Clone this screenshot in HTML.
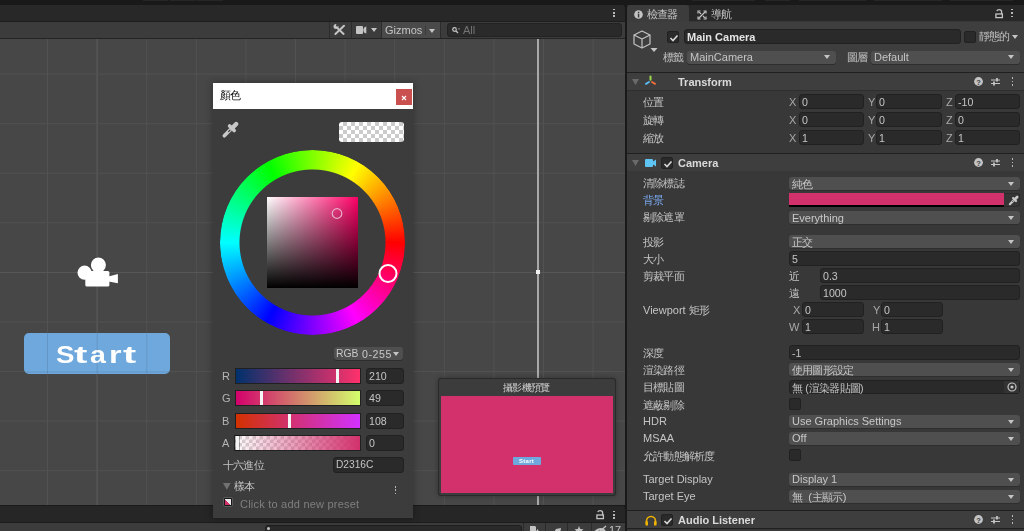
<!DOCTYPE html>
<html lang="zh-Hant"><head><meta charset="utf-8"><style>
*{margin:0;padding:0;box-sizing:border-box}
html,body{width:1024px;height:531px;overflow:hidden;background:#191919;font-family:"Liberation Sans",sans-serif;color:#c4c4c4;font-size:11px}
.a{position:absolute}
.t{position:absolute;white-space:nowrap;line-height:1;will-change:transform}
.fld{position:absolute;background:#2a2a2a;border:1px solid #212121;border-radius:3px}
.dd{position:absolute;background:#4f4f4f;border-radius:3px;box-shadow:0 1px 0 #2e2e2e}
.arr{position:absolute;width:0;height:0;border-left:3.5px solid transparent;border-right:3.5px solid transparent;border-top:4px solid #c4c4c4}
.cb{position:absolute;width:12px;height:12px;background:#2a2a2a;border:1px solid #212121;border-radius:2px}
svg{position:absolute;overflow:visible}
</style></head>
<body>
<div id="root" style="position:relative;width:1024px;height:531px;overflow:hidden">
<div class="a" style="left:0px;top:0px;width:1024px;height:5px;background:#191919;"></div>
<div class="a" style="left:143px;top:0px;width:25px;height:1px;background:#262626;"></div>
<div class="a" style="left:170px;top:0px;width:26px;height:1px;background:#262626;"></div>
<div class="a" style="left:197px;top:0px;width:26px;height:1px;background:#262626;"></div>
<div class="a" style="left:692px;top:0px;width:63px;height:1px;background:#262626;"></div>
<div class="a" style="left:765px;top:0px;width:25px;height:1px;background:#262626;"></div>
<div class="a" style="left:799px;top:0px;width:67px;height:1px;background:#262626;"></div>
<div class="a" style="left:874px;top:0px;width:68px;height:1px;background:#262626;"></div>
<div class="a" style="left:950px;top:0px;width:63px;height:1px;background:#262626;"></div>
<div class="a" style="left:0px;top:5px;width:625px;height:16px;background:#282828;border-radius:0 3px 0 0"></div>
<div class="a" style="left:0px;top:21px;width:625px;height:1px;background:#1e1e1e;"></div>
<div class="a" style="left:0px;top:22px;width:625px;height:16px;background:#3c3c3c;"></div>
<div class="a" style="left:0px;top:38px;width:625px;height:1px;background:#242424;"></div>
<div class="a" style="left:0;top:39px;width:625px;height:466px;background:#474747;overflow:hidden">
<svg width="625" height="466" style="left:0;top:0">
<line x1="47.5" y1="0" x2="47.5" y2="466" stroke="#525252" stroke-width="1"/><line x1="97.1" y1="0" x2="97.1" y2="466" stroke="#5e5e5e" stroke-width="1"/><line x1="146.7" y1="0" x2="146.7" y2="466" stroke="#525252" stroke-width="1"/><line x1="196.3" y1="0" x2="196.3" y2="466" stroke="#525252" stroke-width="1"/><line x1="245.9" y1="0" x2="245.9" y2="466" stroke="#525252" stroke-width="1"/><line x1="295.5" y1="0" x2="295.5" y2="466" stroke="#525252" stroke-width="1"/><line x1="345.1" y1="0" x2="345.1" y2="466" stroke="#525252" stroke-width="1"/><line x1="394.7" y1="0" x2="394.7" y2="466" stroke="#525252" stroke-width="1"/><line x1="444.3" y1="0" x2="444.3" y2="466" stroke="#525252" stroke-width="1"/><line x1="493.9" y1="0" x2="493.9" y2="466" stroke="#525252" stroke-width="1"/><line x1="543.5" y1="0" x2="543.5" y2="466" stroke="#525252" stroke-width="1"/><line x1="593.1" y1="0" x2="593.1" y2="466" stroke="#525252" stroke-width="1"/><line x1="0" y1="-14.5" x2="625" y2="-14.5" stroke="#525252" stroke-width="1"/><line x1="0" y1="35.1" x2="625" y2="35.1" stroke="#525252" stroke-width="1"/><line x1="0" y1="84.7" x2="625" y2="84.7" stroke="#525252" stroke-width="1"/><line x1="0" y1="134.2" x2="625" y2="134.2" stroke="#525252" stroke-width="1"/><line x1="0" y1="183.8" x2="625" y2="183.8" stroke="#525252" stroke-width="1"/><line x1="0" y1="233.4" x2="625" y2="233.4" stroke="#5a5a5a" stroke-width="1"/><line x1="0" y1="283.0" x2="625" y2="283.0" stroke="#525252" stroke-width="1"/><line x1="0" y1="332.6" x2="625" y2="332.6" stroke="#525252" stroke-width="1"/><line x1="0" y1="382.1" x2="625" y2="382.1" stroke="#525252" stroke-width="1"/><line x1="0" y1="431.7" x2="625" y2="431.7" stroke="#525252" stroke-width="1"/><line x1="0" y1="481.3" x2="625" y2="481.3" stroke="#525252" stroke-width="1"/>
</svg></div>
<div class="a" style="left:0px;top:505px;width:625px;height:1px;background:#1a1a1a;"></div>
<div class="a" style="left:0px;top:506px;width:625px;height:16px;background:#262626;border-radius:0 3px 0 0"></div>
<div class="a" style="left:0px;top:522px;width:625px;height:1px;background:#1c1c1c;"></div>
<div class="a" style="left:0px;top:523px;width:626px;height:8px;background:#3c3c3c;"></div>
<div class="a" style="left:625px;top:5px;width:2px;height:526px;background:#191919;"></div>
<svg width="625" height="466" style="left:0;top:39px"><line x1="538" y1="0" x2="538" y2="466" stroke="#a8a8a8" stroke-width="2"/></svg>
<div class="a" style="left:536px;top:270px;width:4px;height:4px;background:#f0f0f0;"></div>
<div class="a" style="left:613px;top:8.6px;width:1.8px;height:1.8px;background:#b8b8b8;"></div>
<div class="a" style="left:613px;top:12px;width:1.8px;height:1.8px;background:#b8b8b8;"></div>
<div class="a" style="left:613px;top:15.4px;width:1.8px;height:1.8px;background:#b8b8b8;"></div>
<div class="a" style="left:329px;top:22px;width:1px;height:16px;background:#2c2c2c;"></div>
<div class="a" style="left:351px;top:22px;width:1px;height:16px;background:#2c2c2c;"></div>
<div class="a" style="left:381px;top:22px;width:1px;height:16px;background:#2c2c2c;"></div>
<div class="a" style="left:382px;top:22px;width:58px;height:16px;background:#4a4a4a;"></div>
<div class="a" style="left:440px;top:22px;width:1px;height:16px;background:#2c2c2c;"></div>
<div class="a" style="left:425px;top:26px;width:1px;height:9px;background:#3a3a3a;"></div>
<svg width="14" height="14" style="left:333px;top:23px" viewBox="0 0 14 14"><path d="M11 2.8 L2.4 11" stroke="#c4c4c4" stroke-width="2" stroke-linecap="round"/><path d="M4.6 5.2 L10.6 10.9" stroke="#c4c4c4" stroke-width="2" stroke-linecap="round"/><circle cx="3" cy="3.6" r="2.5" fill="#c4c4c4"/><circle cx="4.3" cy="2.2" r="1.3" fill="#3c3c3c"/></svg>
<div class="a" style="left:356px;top:26px;width:6.5px;height:7.5px;background:#c4c4c4;border-radius:1px"></div>
<svg width="4" height="8" style="left:363.3px;top:26px" viewBox="0 0 4 8"><path d="M3.3 0.5 L3.3 7.5 Q0.3 7 0.3 4 Q0.3 1 3.3 0.5Z" fill="#c4c4c4"/></svg>
<div class="arr" style="left:370.5px;top:28px;border-left-width:3.5px;border-right-width:3.5px;border-top-width:4px"></div>
<div class="t" style="left:385px;top:25px;font-size:11px;color:#c4c4c4;">Gizmos</div>
<div class="arr" style="left:429px;top:29px"></div>
<div class="a" style="left:447px;top:23px;width:175px;height:14px;background:#2a2a2a;border:1px solid #222;border-radius:3px"></div>
<svg width="8" height="7" style="left:452px;top:27px" viewBox="0 0 8 7"><circle cx="2.5" cy="2.5" r="1.8" stroke="#c4c4c4" stroke-width="1.2" fill="none"/><path d="M3.8 3.8 L6 6" stroke="#c4c4c4" stroke-width="1.3"/><path d="M6 1.5 L8 1.5 L7 2.7Z" fill="#c4c4c4"/></svg>
<div class="t" style="left:463px;top:25px;font-size:11px;color:#747474;">All</div>
<svg width="40" height="30" style="left:78px;top:256px" viewBox="78 256 40 30"><circle cx="98.4" cy="266" r="9" fill="none" stroke="#3e3e3e" stroke-width="0.8" opacity="0.6"/><g fill="#ffffff"><circle cx="84.6" cy="272.7" r="7.1"/><circle cx="98.4" cy="265" r="7.5"/><rect x="85.3" y="271" width="24.1" height="15.4" rx="1.5"/><path d="M108.5 276.5 L117.9 274 L117.9 283.3 L108.5 281.5Z"/></g></svg>
<div class="a" style="left:24px;top:333px;width:146px;height:41px;background:#6fa8dc;border-radius:5px"></div>
<div class="t" style="left:56.3px;top:344px;font-size:23px;font-weight:bold;color:#fff;transform-origin:0 0;transform:scaleX(1.2)">S</div>
<div class="t" style="left:74.3px;top:344px;font-size:23px;font-weight:bold;color:#fff;transform-origin:0 0;transform:scaleX(1.75)">t</div>
<div class="t" style="left:89.6px;top:344px;font-size:23px;font-weight:bold;color:#fff;transform-origin:0 0;transform:scaleX(1.24)">a</div>
<div class="t" style="left:108.9px;top:344px;font-size:23px;font-weight:bold;color:#fff;transform-origin:0 0;transform:scaleX(1.4)">r</div>
<div class="t" style="left:123.3px;top:344px;font-size:23px;font-weight:bold;color:#fff;transform-origin:0 0;transform:scaleX(1.72)">t</div>
<svg width="146" height="41" style="left:24px;top:333px" viewBox="24 333 146 41"><g stroke="#000" stroke-opacity="0.10" stroke-width="1"><line x1="47.5" y1="333" x2="47.5" y2="374"/><line x1="97.2" y1="333" x2="97.2" y2="374"/><line x1="146.8" y1="333" x2="146.8" y2="374"/><line x1="24" y1="372" x2="170" y2="372"/></g></svg>
<svg width="10" height="10" style="left:596px;top:510px" viewBox="0 0 10 10"><path d="M1.8 2.2 Q2.2 0.6 4.2 0.6 Q6.6 0.6 6.6 2.8 V5" stroke="#c4c4c4" stroke-width="1.3" fill="none"/><rect x="0.9" y="5" width="6.5" height="3.6" fill="none" stroke="#c4c4c4" stroke-width="1.3"/></svg>
<div class="a" style="left:613px;top:510.6px;width:1.7px;height:1.7px;background:#b8b8b8;"></div>
<div class="a" style="left:613px;top:514px;width:1.7px;height:1.7px;background:#b8b8b8;"></div>
<div class="a" style="left:613px;top:517.4px;width:1.7px;height:1.7px;background:#b8b8b8;"></div>
<div class="a" style="left:265px;top:525px;width:257px;height:12px;background:#2a2a2a;border:1px solid #1e1e1e;border-radius:3px"></div>
<div class="a" style="left:267px;top:527px;width:3px;height:3px;background:#c4c4c4;border-radius:50%"></div>
<div class="a" style="left:523px;top:523px;width:1px;height:8px;background:#2a2a2a;"></div>
<div class="a" style="left:545px;top:523px;width:1px;height:8px;background:#2a2a2a;"></div>
<div class="a" style="left:567px;top:523px;width:1px;height:8px;background:#2a2a2a;"></div>
<div class="a" style="left:591px;top:523px;width:1px;height:8px;background:#2a2a2a;"></div>
<svg width="12" height="8" style="left:529px;top:525px" viewBox="0 0 12 8"><path d="M1 1 H6 L7 2 V8 H1Z" fill="#c4c4c4"/><path d="M6 8 L8.5 4 L11 8Z" fill="#c4c4c4"/></svg>
<svg width="10" height="8" style="left:552px;top:526px" viewBox="0 0 10 8"><path d="M1 8 L4 3 L9 2 L8 8Z" fill="#c4c4c4"/></svg>
<svg width="10" height="8" style="left:574px;top:526px" viewBox="0 0 10 8"><path d="M5 0 L6.2 3 L9.5 3.3 L7 5.5 L7.8 8 L2.2 8 L3 5.5 L0.5 3.3 L3.8 3Z" fill="#c4c4c4"/></svg>
<svg width="14" height="8" style="left:594px;top:525px" viewBox="0 0 14 8"><path d="M1 7 Q6 2 11 6" stroke="#c4c4c4" stroke-width="2.2" fill="none"/><path d="M4 8 L12 1" stroke="#c4c4c4" stroke-width="1.3"/></svg>
<div class="t" style="left:609px;top:525px;font-size:11px;color:#c4c4c4;">17</div>
<div class="a" style="left:213px;top:83px;width:200px;height:435px;background:#3c3c3c;box-shadow:0 0 7px 1px rgba(0,0,0,0.28)"></div>
<div class="a" style="left:213px;top:83px;width:200px;height:26px;background:#ffffff;"></div>
<div class="t" style="left:220px;top:90px;font-size:11px;color:#111;"><span style="font-size:11.00px;letter-spacing:-0.77px;position:relative;top:-0.5px">顏色</span></div>
<div class="a" style="left:396px;top:89px;width:16px;height:16px;background:#c9504f;"></div>
<svg width="6" height="6" style="left:401px;top:94.5px" viewBox="0 0 6 6"><path d="M1 1 L5 5 M5 1 L1 5" stroke="#fff" stroke-width="1.15"/></svg>
<svg width="26" height="26" style="left:218px;top:116px" viewBox="0 0 26 26"><path d="M6.3 19.8 L12.5 13.6" stroke="#c8c8c8" stroke-width="3.6" stroke-linecap="round"/><path d="M11.6 10 L16.2 14.6" stroke="#c8c8c8" stroke-width="3.6" stroke-linecap="round"/><path d="M14.5 11.7 L18.2 8" stroke="#c8c8c8" stroke-width="4.4" stroke-linecap="round"/><path d="M10.6 15.6 L12 14.2" stroke="#3c3c3c" stroke-width="1.2" stroke-linecap="round"/></svg>
<div class="a" style="left:339px;top:122px;width:65px;height:20px;border-radius:3px;background-color:#fff;background-image:linear-gradient(45deg,#cbcbcb 25%,transparent 25%,transparent 75%,#cbcbcb 75%),linear-gradient(45deg,#cbcbcb 25%,transparent 25%,transparent 75%,#cbcbcb 75%);background-size:8px 8px;background-position:0 0,4px 4px"></div>
<div class="a" style="left:220px;top:150px;width:185px;height:185px;border-radius:50%;background:conic-gradient(from 90deg,#f00,#f0f,#00f,#0ff,#0f0,#ff0,#f00);-webkit-mask:radial-gradient(circle,transparent 72.5px,#000 73.5px);mask:radial-gradient(circle,transparent 72.5px,#000 73.5px)"></div>
<div class="a" style="left:267px;top:197px;width:91px;height:91px;background:linear-gradient(to bottom,rgba(0,0,0,0),#000),linear-gradient(to right,#fff,#ff0066)"></div>
<svg width="200" height="200" style="left:213px;top:140px" viewBox="213 140 200 200"><circle cx="388" cy="273.5" r="8.5" fill="none" stroke="#fff" stroke-width="2"/><circle cx="337" cy="213.5" r="4.8" fill="none" stroke="#e8b0c8" stroke-width="1.2"/></svg>
<div class="a" style="left:334px;top:347px;width:69px;height:13px;background:#4f4f4f;border-radius:3px;box-shadow:0 1px 0 #2e2e2e"></div>
<div class="t" style="left:336px;top:349px;font-size:10.4px;color:#c8c8c8;">RGB</div>
<div class="t" style="left:361.5px;top:349px;font-size:10.6px;color:#c8c8c8;letter-spacing:0.55px">0-255</div>
<div class="arr" style="left:393px;top:352px"></div>
<div class="t" style="left:222px;top:371px;font-size:11px;color:#b4b4b4;">R</div>
<div class="a" style="left:235px;top:368px;width:126px;height:16px;background:linear-gradient(to right,rgb(0,49,108),rgb(255,49,108));border:1px solid #202020"></div>
<div class="a" style="left:336px;top:369px;width:3px;height:14px;background:#f4f4f4;"></div>
<div class="fld" style="left:366px;top:368px;width:38px;height:16px"></div>
<div class="t" style="left:369px;top:371px;font-size:10.6px;color:#c4c4c4;">210</div>
<div class="t" style="left:222px;top:393px;font-size:11px;color:#b4b4b4;">G</div>
<div class="a" style="left:235px;top:390px;width:126px;height:16px;background:linear-gradient(to right,rgb(210,0,108),rgb(210,255,108));border:1px solid #202020"></div>
<div class="a" style="left:260px;top:391px;width:3px;height:14px;background:#f4f4f4;"></div>
<div class="fld" style="left:366px;top:390px;width:38px;height:16px"></div>
<div class="t" style="left:369px;top:393px;font-size:10.6px;color:#c4c4c4;">49</div>
<div class="t" style="left:222px;top:416px;font-size:11px;color:#b4b4b4;">B</div>
<div class="a" style="left:235px;top:413px;width:126px;height:16px;background:linear-gradient(to right,rgb(210,49,0),rgb(210,49,255));border:1px solid #202020"></div>
<div class="a" style="left:288px;top:414px;width:3px;height:14px;background:#f4f4f4;"></div>
<div class="fld" style="left:366px;top:413px;width:38px;height:16px"></div>
<div class="t" style="left:369px;top:416px;font-size:10.6px;color:#c4c4c4;">108</div>
<div class="t" style="left:222px;top:438px;font-size:11px;color:#b4b4b4;">A</div>
<div class="a" style="left:234px;top:435px;width:127px;height:16px;border:1px solid #202020;background:linear-gradient(to right,rgba(210,49,108,0),rgba(210,49,108,1)),linear-gradient(45deg,#d2d2d2 25%,transparent 25%,transparent 75%,#d2d2d2 75%),linear-gradient(45deg,#d2d2d2 25%,transparent 25%,transparent 75%,#d2d2d2 75%),#fff;background-size:100% 100%,7px 7px,7px 7px,auto;background-position:0 0,0 0,3.5px 3.5px,0 0"></div>
<div class="a" style="left:236px;top:436px;width:3px;height:14px;background:#f4f4f4;box-shadow:0 0 0 1px rgba(0,0,0,0.3)"></div>
<div class="fld" style="left:366px;top:435px;width:38px;height:16px"></div>
<div class="t" style="left:369px;top:438px;font-size:10.6px;color:#c4c4c4;">0</div>
<div class="t" style="left:223px;top:460px;font-size:11px;color:#c4c4c4;"><span style="font-size:11.00px;letter-spacing:-0.77px;position:relative;top:-0.5px">十六進位</span></div>
<div class="fld" style="left:333px;top:457px;width:71px;height:16px"></div>
<div class="t" style="left:336px;top:460px;font-size:10.2px;color:#c4c4c4;">D2316C</div>
<svg width="8" height="7" style="left:223.4px;top:483px"><path d="M0 0 L7.7 0 L3.85 6.8Z" fill="#727272"/></svg>
<div class="t" style="left:233.5px;top:481px;font-size:11px;color:#c4c4c4;"><span style="font-size:11.00px;letter-spacing:-0.77px;position:relative;top:-0.5px">樣本</span></div>
<div class="a" style="left:394.7px;top:486px;width:1.7px;height:1.7px;background:#b8b8b8;"></div>
<div class="a" style="left:394.7px;top:489.4px;width:1.7px;height:1.7px;background:#b8b8b8;"></div>
<div class="a" style="left:394.7px;top:492.8px;width:1.7px;height:1.7px;background:#b8b8b8;"></div>
<div class="a" style="left:223px;top:497px;width:10px;height:10px;background:#161616;border:1px solid #5a5a5a;border-radius:2px"></div>
<div class="a" style="left:224.5px;top:498.8px;width:6.5px;height:6.5px;background:linear-gradient(to top right,#d2316c 50%,#e8e8e8 50%)"></div>
<div class="t" style="left:240px;top:499px;font-size:11px;color:#7f7f7f;letter-spacing:0.22px">Click to add new preset</div>
<div class="a" style="left:438px;top:378px;width:178px;height:118px;background:#2a2a2a;border-radius:3px;box-shadow:0 0 5px rgba(0,0,0,0.3)"></div>
<div class="a" style="left:439px;top:379px;width:176px;height:116px;background:#3c3c3c;border-radius:2px"></div>
<div class="t" style="left:502.5px;top:383px;font-size:10.3px;color:#d2d2d2;"><span style="font-size:10.30px;letter-spacing:-0.72px;position:relative;top:-0.5px">攝影機預覽</span></div>
<div class="a" style="left:441px;top:396px;width:172px;height:97px;background:#d2316c;"></div>
<div class="a" style="left:513px;top:457px;width:28px;height:8px;background:#6fa8dc;border-radius:1px"></div>
<div class="t" style="left:519px;top:458px;font-size:6px;color:#fff;font-weight:bold;letter-spacing:0.3px">Start</div>
<div class="a" style="left:627px;top:5px;width:397px;height:16px;background:#282828;"></div>
<div class="a" style="left:627px;top:21px;width:397px;height:510px;background:#383838;"></div>
<div class="a" style="left:627px;top:5px;width:62px;height:17px;background:#3c3c3c;border-radius:3px 3px 0 0"></div>
<svg width="10" height="10" style="left:633.8px;top:9.6px" viewBox="0 0 10 10"><circle cx="4.5" cy="4.5" r="4.3" fill="#c4c4c4"/><rect x="3.8" y="3.7" width="1.5" height="3.8" fill="#3c3c3c"/><rect x="3.8" y="1.8" width="1.5" height="1.3" fill="#3c3c3c"/></svg>
<div class="t" style="left:647px;top:9px;font-size:11px;color:#c4c4c4;"><span style="font-size:11.00px;letter-spacing:-0.77px;position:relative;top:-0.5px">檢查器</span></div>
<svg width="10" height="10" style="left:697px;top:9.5px" viewBox="0 0 10 10"><g stroke="#c4c4c4" stroke-width="1.2" fill="none"><path d="M1.5 8.5 L8.5 1.5"/><path d="M1 3.5 V1 H3.5 M6.5 9 H9 V6.5"/><path d="M1 6.5 V9 H3.5 M6.5 1 H9 V3.5"/><path d="M2.2 2.2 L4 4 M6 6 L7.8 7.8"/></g></svg>
<div class="t" style="left:711px;top:9px;font-size:11px;color:#c4c4c4;"><span style="font-size:11.00px;letter-spacing:-0.77px;position:relative;top:-0.5px">導航</span></div>
<svg width="10" height="10" style="left:995px;top:9px" viewBox="0 0 10 10"><path d="M1.8 2.2 Q2.2 0.6 4.2 0.6 Q6.6 0.6 6.6 2.8 V5" stroke="#c4c4c4" stroke-width="1.3" fill="none"/><rect x="0.9" y="5" width="6.5" height="3.6" fill="none" stroke="#c4c4c4" stroke-width="1.3"/></svg>
<div class="a" style="left:1011.3px;top:8.8px;width:1.7px;height:1.7px;background:#b8b8b8;"></div>
<div class="a" style="left:1011.3px;top:12.2px;width:1.7px;height:1.7px;background:#b8b8b8;"></div>
<div class="a" style="left:1011.3px;top:15.6px;width:1.7px;height:1.7px;background:#b8b8b8;"></div>
<div class="a" style="left:627px;top:22px;width:397px;height:50px;background:#3e3e3e;"></div>
<svg width="20" height="22" style="left:632.8px;top:30px" viewBox="0 0 20 22"><g stroke="#c4c4c4" stroke-width="1.2" fill="none" stroke-linejoin="round"><path d="M9 1 L17 5 L17 14 L9 18 L1 14 L1 5 Z"/><path d="M1 5 L9 9 L17 5 M9 9 L9 18"/></g><path d="M17.5 18 L24.5 18 L21 22Z" fill="#c4c4c4"/></svg>
<div class="cb" style="left:667px;top:31px"></div>
<svg width="10" height="8" style="left:668.5px;top:33.5px" viewBox="0 0 10 8"><path d="M1.5 4 L4 6.5 L8.5 1.5" stroke="#d8d8d8" stroke-width="1.6" fill="none"/></svg>
<div class="fld" style="left:684px;top:29px;width:277px;height:15px"></div>
<div class="t" style="left:687px;top:32px;font-size:11px;color:#e4e4e4;font-weight:bold">Main Camera</div>
<div class="cb" style="left:964px;top:31px"></div>
<div class="t" style="left:979px;top:31px;font-size:11px;color:#c4c4c4;"><span style="font-size:11.00px;letter-spacing:-0.77px;position:relative;top:-0.5px">靜態的</span></div>
<div class="arr" style="left:1012px;top:35px"></div>
<div class="t" style="left:663px;top:52px;font-size:11px;color:#c4c4c4;"><span style="font-size:11.00px;letter-spacing:-0.77px;position:relative;top:-0.5px">標籤</span></div>
<div class="dd" style="left:687px;top:51px;width:149px;height:13px"></div>
<div class="t" style="left:690px;top:52px;font-size:11px;color:#c4c4c4;">MainCamera</div>
<div class="arr" style="left:824px;top:55px"></div>
<div class="t" style="left:847px;top:52px;font-size:11px;color:#c4c4c4;"><span style="font-size:11.00px;letter-spacing:-0.77px;position:relative;top:-0.5px">圖層</span></div>
<div class="dd" style="left:871px;top:51px;width:149px;height:13px"></div>
<div class="t" style="left:874px;top:52px;font-size:11px;color:#c4c4c4;">Default</div>
<div class="arr" style="left:1008px;top:55px"></div>
<div class="a" style="left:627px;top:72px;width:397px;height:1px;background:#1f1f1f;"></div>
<div class="a" style="left:627px;top:73px;width:397px;height:17px;background:#3e3e3e;"></div>
<svg width="8" height="7" style="left:632px;top:79px"><path d="M0 0 L7 0 L3.5 6Z" fill="#6a6a6a"/></svg>
<svg width="14" height="12" style="left:644px;top:75px" viewBox="0 0 14 12"><path d="M6.5 4.8 L6.5 1.5" stroke="#9bd84a" stroke-width="2" stroke-linecap="round"/><path d="M5 7 L2 8.8" stroke="#5ab8f0" stroke-width="2" stroke-linecap="round"/><path d="M8 7 L11 8.8" stroke="#f06a3a" stroke-width="2" stroke-linecap="round"/></svg>
<div class="t" style="left:678px;top:77px;font-size:11px;color:#dadada;font-weight:bold">Transform</div>
<svg width="10" height="10" style="left:974px;top:77px" viewBox="0 0 10 10"><circle cx="4.5" cy="4.5" r="4.4" fill="#c4c4c4"/><text x="4.5" y="7.6" font-size="7.5" font-weight="bold" text-anchor="middle" fill="#3e3e3e" font-family="Liberation Sans">?</text></svg>
<svg width="10" height="10" style="left:991px;top:77px" viewBox="0 0 10 10"><g stroke="#c4c4c4" stroke-width="1.2"><path d="M0 3 H9 M0 6.5 H9"/></g><g stroke="#c4c4c4" stroke-width="1.8"><path d="M6 1 V4.5 M3 4.5 V8.5"/></g></svg>
<div class="a" style="left:1011.6px;top:77.2px;width:1.7px;height:1.7px;background:#b8b8b8;"></div>
<div class="a" style="left:1011.6px;top:80.6px;width:1.7px;height:1.7px;background:#b8b8b8;"></div>
<div class="a" style="left:1011.6px;top:84px;width:1.7px;height:1.7px;background:#b8b8b8;"></div>
<div class="a" style="left:627px;top:90px;width:397px;height:1px;background:#2e2e2e;"></div>
<div class="t" style="left:643px;top:97px;font-size:11px;color:#c4c4c4;"><span style="font-size:11.00px;letter-spacing:-0.77px;position:relative;top:-0.5px">位置</span></div>
<div class="t" style="left:789px;top:97px;font-size:11px;color:#a8a8a8;">X</div>
<div class="fld" style="left:799px;top:94px;width:65px;height:15px"></div>
<div class="t" style="left:802px;top:97px;font-size:10.6px;color:#c4c4c4;">0</div>
<div class="t" style="left:868px;top:97px;font-size:11px;color:#a8a8a8;">Y</div>
<div class="fld" style="left:876px;top:94px;width:66px;height:15px"></div>
<div class="t" style="left:879px;top:97px;font-size:10.6px;color:#c4c4c4;">0</div>
<div class="t" style="left:946px;top:97px;font-size:11px;color:#a8a8a8;">Z</div>
<div class="fld" style="left:955px;top:94px;width:65px;height:15px"></div>
<div class="t" style="left:958px;top:97px;font-size:10.6px;color:#c4c4c4;">-10</div>
<div class="t" style="left:643px;top:115px;font-size:11px;color:#c4c4c4;"><span style="font-size:11.00px;letter-spacing:-0.77px;position:relative;top:-0.5px">旋轉</span></div>
<div class="t" style="left:789px;top:115px;font-size:11px;color:#a8a8a8;">X</div>
<div class="fld" style="left:799px;top:112px;width:65px;height:15px"></div>
<div class="t" style="left:802px;top:115px;font-size:10.6px;color:#c4c4c4;">0</div>
<div class="t" style="left:868px;top:115px;font-size:11px;color:#a8a8a8;">Y</div>
<div class="fld" style="left:876px;top:112px;width:66px;height:15px"></div>
<div class="t" style="left:879px;top:115px;font-size:10.6px;color:#c4c4c4;">0</div>
<div class="t" style="left:946px;top:115px;font-size:11px;color:#a8a8a8;">Z</div>
<div class="fld" style="left:955px;top:112px;width:65px;height:15px"></div>
<div class="t" style="left:958px;top:115px;font-size:10.6px;color:#c4c4c4;">0</div>
<div class="t" style="left:643px;top:133px;font-size:11px;color:#c4c4c4;"><span style="font-size:11.00px;letter-spacing:-0.77px;position:relative;top:-0.5px">縮放</span></div>
<div class="t" style="left:789px;top:133px;font-size:11px;color:#a8a8a8;">X</div>
<div class="fld" style="left:799px;top:130px;width:65px;height:15px"></div>
<div class="t" style="left:802px;top:133px;font-size:10.6px;color:#c4c4c4;">1</div>
<div class="t" style="left:868px;top:133px;font-size:11px;color:#a8a8a8;">Y</div>
<div class="fld" style="left:876px;top:130px;width:66px;height:15px"></div>
<div class="t" style="left:879px;top:133px;font-size:10.6px;color:#c4c4c4;">1</div>
<div class="t" style="left:946px;top:133px;font-size:11px;color:#a8a8a8;">Z</div>
<div class="fld" style="left:955px;top:130px;width:65px;height:15px"></div>
<div class="t" style="left:958px;top:133px;font-size:10.6px;color:#c4c4c4;">1</div>
<div class="a" style="left:627px;top:153px;width:397px;height:1px;background:#1f1f1f;"></div>
<div class="a" style="left:627px;top:154px;width:397px;height:17px;background:#3e3e3e;"></div>
<svg width="8" height="7" style="left:632px;top:160px"><path d="M0 0 L7 0 L3.5 6Z" fill="#6a6a6a"/></svg>
<svg width="12" height="8" style="left:645px;top:159px" viewBox="0 0 12 8"><rect x="0" y="0" width="8" height="8" rx="1" fill="#5ec4f4"/><path d="M8 2.5 L11 0.5 L11 7.5 L8 5.5Z" fill="#5ec4f4"/></svg>
<div class="cb" style="left:661px;top:157px"></div>
<svg width="10" height="8" style="left:662.5px;top:159.5px" viewBox="0 0 10 8"><path d="M1.5 4 L4 6.5 L8.5 1.5" stroke="#d8d8d8" stroke-width="1.6" fill="none"/></svg>
<div class="t" style="left:678px;top:158px;font-size:11px;color:#dadada;font-weight:bold">Camera</div>
<svg width="10" height="10" style="left:974px;top:158px" viewBox="0 0 10 10"><circle cx="4.5" cy="4.5" r="4.4" fill="#c4c4c4"/><text x="4.5" y="7.6" font-size="7.5" font-weight="bold" text-anchor="middle" fill="#3e3e3e" font-family="Liberation Sans">?</text></svg>
<svg width="10" height="10" style="left:991px;top:158px" viewBox="0 0 10 10"><g stroke="#c4c4c4" stroke-width="1.2"><path d="M0 3 H9 M0 6.5 H9"/></g><g stroke="#c4c4c4" stroke-width="1.8"><path d="M6 1 V4.5 M3 4.5 V8.5"/></g></svg>
<div class="a" style="left:1011.6px;top:158.2px;width:1.7px;height:1.7px;background:#b8b8b8;"></div>
<div class="a" style="left:1011.6px;top:161.6px;width:1.7px;height:1.7px;background:#b8b8b8;"></div>
<div class="a" style="left:1011.6px;top:165px;width:1.7px;height:1.7px;background:#b8b8b8;"></div>
<div class="t" style="left:643px;top:178px;font-size:11px;color:#c4c4c4;"><span style="font-size:11.00px;letter-spacing:-0.77px;position:relative;top:-0.5px">清除標誌</span></div>
<div class="dd" style="left:789px;top:177px;width:231px;height:13px"></div>
<div class="t" style="left:792px;top:179px;font-size:11px;color:#c8c8c8;"><span style="font-size:11.00px;letter-spacing:-0.77px;position:relative;top:-0.5px">純色</span></div>
<div class="arr" style="left:1008px;top:182px"></div>
<div class="t" style="left:643px;top:195px;font-size:11px;color:#7aaaf0;"><span style="font-size:11.00px;letter-spacing:-0.77px;position:relative;top:-0.5px">背景</span></div>
<div class="a" style="left:789px;top:193px;width:215px;height:12px;background:#d2316c;"></div>
<div class="a" style="left:789px;top:205px;width:215px;height:2px;background:#000;"></div>
<div class="a" style="left:1004px;top:193px;width:16px;height:14px;background:#353535;border:1px solid #2c2c2c;border-left:none;border-radius:0 3px 3px 0"></div>
<svg width="16" height="16" style="left:1005.8px;top:192.2px" viewBox="0 0 26 26"><path d="M6.3 19.8 L12.5 13.6" stroke="#c8c8c8" stroke-width="3.6" stroke-linecap="round"/><path d="M11.6 10 L16.2 14.6" stroke="#c8c8c8" stroke-width="3.6" stroke-linecap="round"/><path d="M14.5 11.7 L18.2 8" stroke="#c8c8c8" stroke-width="4.4" stroke-linecap="round"/><path d="M10.6 15.6 L12 14.2" stroke="#353535" stroke-width="1.2" stroke-linecap="round"/></svg>
<div class="t" style="left:643px;top:212px;font-size:11px;color:#c4c4c4;"><span style="font-size:11.00px;letter-spacing:-0.77px;position:relative;top:-0.5px">剔除遮罩</span></div>
<div class="dd" style="left:789px;top:211px;width:231px;height:13px"></div>
<div class="t" style="left:792px;top:213px;font-size:11px;color:#c8c8c8;">Everything</div>
<div class="arr" style="left:1008px;top:216px"></div>
<div class="t" style="left:643px;top:237px;font-size:11px;color:#c4c4c4;"><span style="font-size:11.00px;letter-spacing:-0.77px;position:relative;top:-0.5px">投影</span></div>
<div class="dd" style="left:789px;top:235px;width:231px;height:13px"></div>
<div class="t" style="left:792px;top:237px;font-size:11px;color:#c8c8c8;"><span style="font-size:11.00px;letter-spacing:-0.77px;position:relative;top:-0.5px">正交</span></div>
<div class="arr" style="left:1008px;top:240px"></div>
<div class="t" style="left:643px;top:254px;font-size:11px;color:#c4c4c4;"><span style="font-size:11.00px;letter-spacing:-0.77px;position:relative;top:-0.5px">大小</span></div>
<div class="fld" style="left:789px;top:251px;width:231px;height:15px"></div>
<div class="t" style="left:792px;top:254px;font-size:10.6px;color:#c4c4c4;">5</div>
<div class="t" style="left:643px;top:271px;font-size:11px;color:#c4c4c4;"><span style="font-size:11.00px;letter-spacing:-0.77px;position:relative;top:-0.5px">剪裁平面</span></div>
<div class="t" style="left:789px;top:271px;font-size:11px;color:#c4c4c4;"><span style="font-size:11.00px;letter-spacing:-0.77px;position:relative;top:-0.5px">近</span></div>
<div class="fld" style="left:820px;top:268px;width:200px;height:15px"></div>
<div class="t" style="left:823px;top:271px;font-size:10.6px;color:#c4c4c4;">0.3</div>
<div class="t" style="left:789px;top:288px;font-size:11px;color:#c4c4c4;"><span style="font-size:11.00px;letter-spacing:-0.77px;position:relative;top:-0.5px">遠</span></div>
<div class="fld" style="left:820px;top:285px;width:200px;height:15px"></div>
<div class="t" style="left:823px;top:288px;font-size:10.6px;color:#c4c4c4;">1000</div>
<div class="t" style="left:643px;top:305px;font-size:11px;color:#c4c4c4;">Viewport <span style="font-size:11.00px;letter-spacing:-0.77px;position:relative;top:-0.5px">矩形</span></div>
<div class="t" style="left:793px;top:305px;font-size:11px;color:#a8a8a8;">X</div>
<div class="fld" style="left:802px;top:302px;width:62px;height:15px"></div>
<div class="t" style="left:805px;top:305px;font-size:10.6px;color:#c4c4c4;">0</div>
<div class="t" style="left:873px;top:305px;font-size:11px;color:#a8a8a8;">Y</div>
<div class="fld" style="left:881px;top:302px;width:62px;height:15px"></div>
<div class="t" style="left:884px;top:305px;font-size:10.6px;color:#c4c4c4;">0</div>
<div class="t" style="left:789px;top:322px;font-size:11px;color:#a8a8a8;">W</div>
<div class="fld" style="left:802px;top:319px;width:62px;height:15px"></div>
<div class="t" style="left:805px;top:322px;font-size:10.6px;color:#c4c4c4;">1</div>
<div class="t" style="left:872px;top:322px;font-size:11px;color:#a8a8a8;">H</div>
<div class="fld" style="left:881px;top:319px;width:62px;height:15px"></div>
<div class="t" style="left:884px;top:322px;font-size:10.6px;color:#c4c4c4;">1</div>
<div class="t" style="left:643px;top:348px;font-size:11px;color:#c4c4c4;"><span style="font-size:11.00px;letter-spacing:-0.77px;position:relative;top:-0.5px">深度</span></div>
<div class="fld" style="left:789px;top:345px;width:231px;height:15px"></div>
<div class="t" style="left:792px;top:348px;font-size:10.6px;color:#c4c4c4;">-1</div>
<div class="t" style="left:643px;top:365px;font-size:11px;color:#c4c4c4;"><span style="font-size:11.00px;letter-spacing:-0.77px;position:relative;top:-0.5px">渲染路徑</span></div>
<div class="dd" style="left:789px;top:363px;width:231px;height:13px"></div>
<div class="t" style="left:792px;top:365px;font-size:11px;color:#c8c8c8;"><span style="font-size:11.00px;letter-spacing:-0.77px;position:relative;top:-0.5px">使用圖形設定</span></div>
<div class="arr" style="left:1008px;top:368px"></div>
<div class="t" style="left:643px;top:382px;font-size:11px;color:#c4c4c4;"><span style="font-size:11.00px;letter-spacing:-0.77px;position:relative;top:-0.5px">目標貼圖</span></div>
<div class="fld" style="left:789px;top:380px;width:231px;height:14px"></div>
<div class="t" style="left:792px;top:383px;font-size:10.6px;color:#c4c4c4;"><span style="font-size:10.60px;letter-spacing:-0.74px;position:relative;top:-0.5px">無</span> (<span style="font-size:10.60px;letter-spacing:-0.74px;position:relative;top:-0.5px">渲染器貼圖</span>)</div>
<div class="a" style="left:1004px;top:381px;width:15px;height:12px;background:#333"></div>
<svg width="10" height="10" style="left:1007px;top:382px" viewBox="0 0 10 10"><circle cx="5" cy="5" r="4" stroke="#c4c4c4" stroke-width="1.2" fill="none"/><circle cx="5" cy="5" r="1.6" fill="#c4c4c4"/></svg>
<div class="t" style="left:643px;top:400px;font-size:11px;color:#c4c4c4;"><span style="font-size:11.00px;letter-spacing:-0.77px;position:relative;top:-0.5px">遮蔽剔除</span></div>
<div class="cb" style="left:789px;top:398px"></div>
<div class="t" style="left:643px;top:416px;font-size:11px;color:#c4c4c4;">HDR</div>
<div class="dd" style="left:789px;top:415px;width:231px;height:13px"></div>
<div class="t" style="left:792px;top:416px;font-size:11px;color:#c8c8c8;">Use Graphics Settings</div>
<div class="arr" style="left:1008px;top:420px"></div>
<div class="t" style="left:643px;top:433px;font-size:11px;color:#c4c4c4;">MSAA</div>
<div class="dd" style="left:789px;top:432px;width:231px;height:13px"></div>
<div class="t" style="left:792px;top:433px;font-size:11px;color:#c8c8c8;">Off</div>
<div class="arr" style="left:1008px;top:437px"></div>
<div class="t" style="left:643px;top:451px;font-size:11px;color:#c4c4c4;"><span style="font-size:11.00px;letter-spacing:-0.77px;position:relative;top:-0.5px">允許動態解析度</span></div>
<div class="cb" style="left:789px;top:449px"></div>
<div class="t" style="left:643px;top:474px;font-size:11px;color:#c4c4c4;">Target Display</div>
<div class="dd" style="left:789px;top:473px;width:231px;height:13px"></div>
<div class="t" style="left:792px;top:474px;font-size:11px;color:#c8c8c8;">Display 1</div>
<div class="arr" style="left:1008px;top:478px"></div>
<div class="t" style="left:643px;top:491px;font-size:11px;color:#c4c4c4;">Target Eye</div>
<div class="dd" style="left:789px;top:490px;width:231px;height:13px"></div>
<div class="t" style="left:792px;top:492px;font-size:11px;color:#c8c8c8;"><span style="font-size:11.00px;letter-spacing:-0.77px;position:relative;top:-0.5px">無</span>&nbsp;&nbsp;(<span style="font-size:11.00px;letter-spacing:-0.77px;position:relative;top:-0.5px">主顯示</span>)</div>
<div class="arr" style="left:1008px;top:495px"></div>
<div class="a" style="left:627px;top:510px;width:397px;height:1px;background:#1f1f1f;"></div>
<div class="a" style="left:627px;top:511px;width:397px;height:17px;background:#3e3e3e;"></div>
<svg width="12" height="11" style="left:645px;top:514.5px" viewBox="0 0 12 11"><path d="M1.5 9 V6 a4.5 4.5 0 0 1 9 0 V9" stroke="#f0b400" stroke-width="1.6" fill="none"/><rect x="0.5" y="6.5" width="2.5" height="4" fill="#f0b400"/><rect x="9" y="6.5" width="2.5" height="4" fill="#f0b400"/></svg>
<div class="cb" style="left:661px;top:514px"></div>
<svg width="10" height="8" style="left:662.5px;top:516.5px" viewBox="0 0 10 8"><path d="M1.5 4 L4 6.5 L8.5 1.5" stroke="#d8d8d8" stroke-width="1.6" fill="none"/></svg>
<div class="t" style="left:678px;top:515px;font-size:11px;color:#dadada;font-weight:bold">Audio Listener</div>
<svg width="10" height="10" style="left:974px;top:515px" viewBox="0 0 10 10"><circle cx="4.5" cy="4.5" r="4.4" fill="#c4c4c4"/><text x="4.5" y="7.6" font-size="7.5" font-weight="bold" text-anchor="middle" fill="#3e3e3e" font-family="Liberation Sans">?</text></svg>
<svg width="10" height="10" style="left:991px;top:515px" viewBox="0 0 10 10"><g stroke="#c4c4c4" stroke-width="1.2"><path d="M0 3 H9 M0 6.5 H9"/></g><g stroke="#c4c4c4" stroke-width="1.8"><path d="M6 1 V4.5 M3 4.5 V8.5"/></g></svg>
<div class="a" style="left:1011.6px;top:515.2px;width:1.7px;height:1.7px;background:#b8b8b8;"></div>
<div class="a" style="left:1011.6px;top:518.6px;width:1.7px;height:1.7px;background:#b8b8b8;"></div>
<div class="a" style="left:1011.6px;top:522px;width:1.7px;height:1.7px;background:#b8b8b8;"></div>
<div class="a" style="left:627px;top:528px;width:397px;height:1px;background:#1f1f1f;"></div>
</div>
</body></html>
